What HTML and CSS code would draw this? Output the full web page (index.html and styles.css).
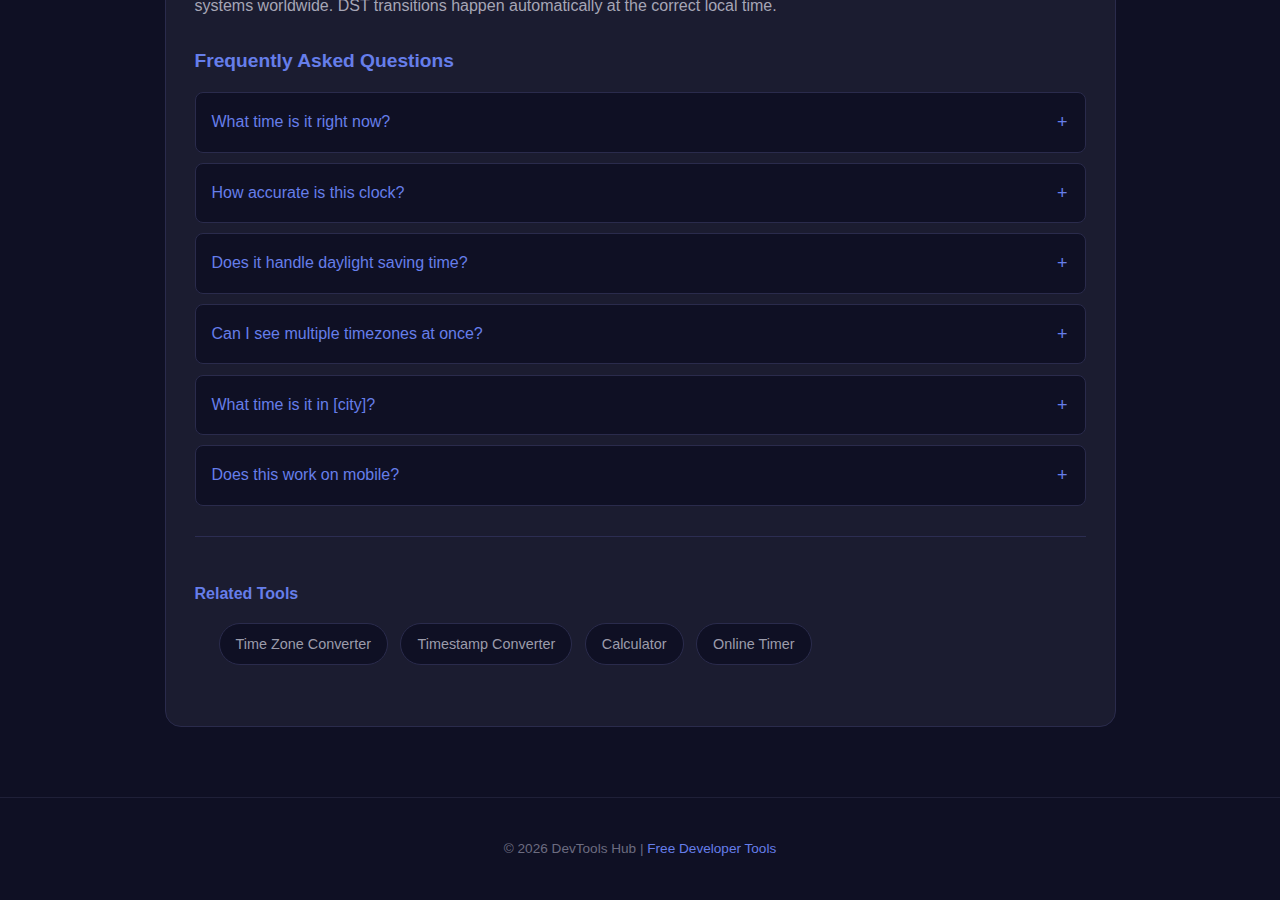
FILE: index.html
```html
<!DOCTYPE html>
<html lang="en">
<head>
<meta charset="utf-8">
<title>World Clock</title>
<link rel="stylesheet" href="styles.css">
</head>
<body>
<main class="page">
  <section class="card">
    <p class="desc">Displays the current time from your device clock, synchronized with network time servers used by operating<br>systems worldwide. DST transitions happen automatically at the correct local time.</p>

    <h2 class="faq-title">Frequently Asked Questions</h2>
    <div class="faq-list">
      <div class="faq-item"><span class="q">What time is it right now?</span><span class="plus">+</span></div>
      <div class="faq-item"><span class="q">How accurate is this clock?</span><span class="plus">+</span></div>
      <div class="faq-item"><span class="q">Does it handle daylight saving time?</span><span class="plus">+</span></div>
      <div class="faq-item"><span class="q">Can I see multiple timezones at once?</span><span class="plus">+</span></div>
      <div class="faq-item"><span class="q">What time is it in [city]?</span><span class="plus">+</span></div>
      <div class="faq-item"><span class="q">Does this work on mobile?</span><span class="plus">+</span></div>
    </div>

    <div class="related">
      <h3 class="related-title">Related Tools</h3>
      <ul class="tools">
        <li><a href="#" class="pill">Time Zone Converter</a></li>
        <li><a href="#" class="pill">Timestamp Converter</a></li>
        <li><a href="#" class="pill">Calculator</a></li>
        <li><a href="#" class="pill">Online Timer</a></li>
      </ul>
    </div>
  </section>
</main>
<footer class="footer">
  <p>© 2026 DevTools Hub | <a href="#">Free Developer Tools</a></p>
</footer>
</body>
</html>
```
FILE: styles.css
```css
* { box-sizing: border-box; }
html, body { margin: 0; padding: 0; }
body {
  background: #0f1024;
  font-family: "Liberation Sans", Arial, sans-serif;
  color: #a0a0b2;
}
.page {
  margin-top: -34px;
  padding-bottom: 70px;
}
.card {
  width: 951px;
  margin: 0 auto;
  background: #1b1c30;
  border: 1px solid #2a2b4c;
  border-radius: 16px;
  padding: 0 29px 30px 29px;
}
.desc {
  margin: 0;
  font-size: 16px;
  line-height: 25.6px;
  color: #a6a6b6;
}
.faq-title {
  margin: 32px 0 20px;
  font-size: 19.2px;
  line-height: 22px;
  font-weight: 700;
  color: #667eea;
}
.faq-list {
  display: flex;
  flex-direction: column;
  gap: 10.2px;
  padding-bottom: 30px;
  border-bottom: 1px solid #2c2d52;
}
.faq-item {
  display: flex;
  justify-content: space-between;
  align-items: center;
  background: #0f1024;
  border: 1px solid #2a2b4c;
  border-radius: 8px;
  padding: 20px 16px;
  font-size: 16px;
  line-height: 18.4px;
  color: #667eea;
}
.plus {
  font-size: 18px;
  color: #667eea;
  margin-right: 1px;
}
.related {
  padding-top: 48px;
}
.related-title {
  margin: 0 0 20px;
  font-size: 16px;
  line-height: 18px;
  font-weight: 700;
  color: #667eea;
}
.tools {
  list-style: none;
  margin: 0 0 31px;
  padding: 0 0 0 24px;
  display: flex;
  gap: 12.5px;
}
.pill {
  display: block;
  padding: 12px 16px;
  font-size: 14.4px;
  line-height: 16px;
  color: #9c9cab;
  text-decoration: none;
  background: #0f1024;
  border: 1px solid #2a2b4c;
  border-radius: 21px;
}
.footer {
  border-top: 1px solid #1f2038;
  padding: 41px 0 40px;
  text-align: center;
}
.footer p {
  margin: 0;
  font-size: 13.6px;
  line-height: 20.8px;
  color: #6c6c80;
}
.footer a {
  color: #667eea;
  text-decoration: none;
}
```
